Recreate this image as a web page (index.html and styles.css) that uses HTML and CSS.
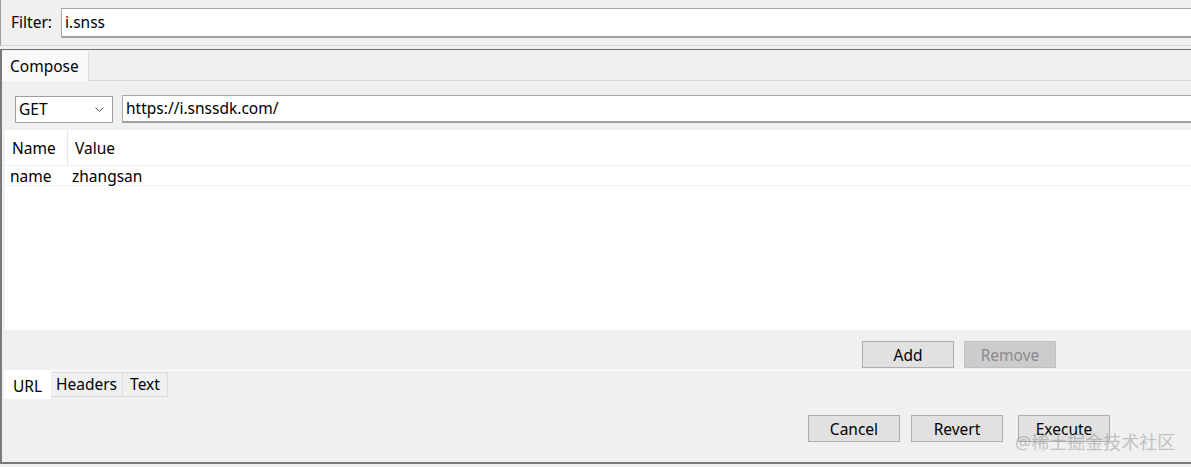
FILE: index.html
```html
<!DOCTYPE html>
<html lang="en">
<head>
    <meta charset="UTF-8">
    <title>Composer</title>
    <link rel="stylesheet" href="styles.css">
</head>
<body>
    <div class="filter-bar">
        <label class="filter-label">Filter:</label>
        <div class="filter-input">i.snss</div>
    </div>

    <div class="frame">
        <div class="top-tabs">
            <div class="top-tab">Compose</div>
        </div>

        <div class="compose">
            <div class="request-row">
                <div class="method">
                    <span>GET</span>
                    <svg class="chevron" width="9" height="6" viewBox="0 0 9 6"><path d="M0.5 0.5 L4.5 4.5 L8.5 0.5" fill="none" stroke="#555" stroke-width="1"/></svg>
                </div>
                <div class="url-input">https://i.snssdk.com/</div>
            </div>

            <div class="params">
                <div class="params-row params-head">
                    <div class="col-name">Name</div>
                    <div class="col-value">Value</div>
                </div>
                <div class="params-row params-item">
                    <div class="col-name">name</div>
                    <div class="col-value">zhangsan</div>
                </div>
            </div>

            <div class="params-actions">
                <button class="btn">Add</button>
                <button class="btn btn-disabled">Remove</button>
            </div>
        </div>

        <div class="bottom-tabs">
            <div class="bottom-tab active">URL</div>
            <div class="bottom-tab tab-headers">Headers</div>
            <div class="bottom-tab tab-text">Text</div>
        </div>

        <div class="footer">
            <button class="btn">Cancel</button>
            <button class="btn">Revert</button>
            <button class="btn btn-execute">Execute</button>
            <span class="watermark">@稀土掘金技术社区</span>
        </div>
    </div>
</body>
</html>
```

FILE: styles.css
```css
body {
    margin: 0;
    padding: 0;
    width: 1191px;
    height: 467px;
    overflow: hidden;
    background: #f0f0f0;
    font-family: "Noto Sans", "Noto Sans CJK SC", sans-serif;
    font-size: 15.5px;
    color: #000;
}

.filter-bar {
    height: 46px;
    box-sizing: border-box;
    display: flex;
    align-items: flex-start;
    padding-top: 8px;
    border-left: 1px solid #a0a0a0;
    border-bottom: 1px solid #d8d8d8;
}

.filter-label {
    width: 50px;
    padding-left: 10px;
    line-height: 28px;
}

.filter-input {
    flex: 1;
    height: 30px;
    box-sizing: border-box;
    background: #fff;
    border-top: 1px solid #a8a8a8;
    border-left: 1px solid #a8a8a8;
    border-bottom: 2px solid #a0a0a0;
    padding-left: 3px;
    line-height: 26px;
    margin-right: -4px;
}

.frame {
    position: relative;
    margin-top: 3px;
    height: 415px;
    box-sizing: border-box;
    border-top: 1px solid #6e6e6e;
    border-left: 2px solid #7a7a7a;
    border-bottom: 2px solid #7a7a7a;
}

.top-tabs {
    height: 31px;
    display: flex;
    border-bottom: 1px solid #d9d9d9;
    box-sizing: border-box;
    padding-top: 1px;
}

.top-tab {
    width: 87px;
    background: #fafafa;
    border-right: 1px solid #dcdcdc;
    padding-left: 8px;
    box-sizing: border-box;
    line-height: 30px;
    margin-bottom: -1px;
}

.compose {
    padding: 14px 0 0 3px;
}

.request-row {
    display: flex;
    align-items: flex-end;
    gap: 9px;
    padding-left: 10px;
    height: 28px;
}

.method {
    width: 98px;
    box-sizing: border-box;
    background: #fff;
    border: 1px solid #a0a0a0;
    display: flex;
    align-items: center;
    justify-content: space-between;
    padding: 0 8px 0 3px;
    height: 27px;
}

.method span {
    line-height: 25px;
}

.chevron {
    margin-top: 1px;
}

.url-input {
    flex: 1;
    height: 28px;
    box-sizing: border-box;
    background: #fff;
    border-top: 1px solid #a8a8a8;
    border-left: 1px solid #a8a8a8;
    border-bottom: 2px solid #a0a0a0;
    padding-left: 3px;
    line-height: 25px;
    margin-right: -4px;
}

.params {
    margin-top: 7px;
    height: 200px;
    background: #fff;
}

.params-row {
    display: flex;
}

.params-head {
    height: 35px;
    border-bottom: 1px solid #eeeeee;
    line-height: 37px;
}

.params-head .col-name {
    width: 55px;
    padding-left: 7px;
    border-right: 1px solid #e5e5e5;
}

.params-head .col-value {
    padding-left: 7px;
}

.params-item {
    height: 19px;
    line-height: 21px;
    border-bottom: 1px solid #f0f0f0;
}

.params-item .col-name {
    width: 62px;
    padding-left: 5px;
}

.params-item .col-value {
    padding-left: 0;
}

.params-actions {
    height: 41px;
    box-sizing: border-box;
    display: flex;
    align-items: flex-start;
    gap: 10px;
    padding: 11px 0 0 857px;
    border-bottom: 1px solid #fbfbfb;
}

.btn {
    width: 92px;
    height: 27px;
    box-sizing: border-box;
    background: #e1e1e1;
    border: 1px solid #adadad;
    border-radius: 0;
    font-family: inherit;
    font-size: 15.5px;
    color: #000;
    padding: 0;
    line-height: 24px;
}

.btn-disabled {
    background: #cccccc;
    border-color: #bfbfbf;
    color: #8a8a8a;
}

.bottom-tabs {
    display: flex;
    height: 28px;
    padding-left: 2px;
    align-items: flex-start;
}

.bottom-tab {
    height: 25px;
    margin-top: 1px;
    box-sizing: border-box;
    border: 1px solid #dcdcdc;
    border-left: none;
    line-height: 22px;
    text-align: center;
}

.tab-headers {
    width: 72px;
}

.tab-text {
    width: 45px;
}

.bottom-tab.active {
    height: 29px;
    margin-top: -1px;
    width: 47px;
    background: #fff;
    border: none;
    line-height: 32px;
}

.footer {
    display: flex;
    gap: 11px;
    padding: 16px 0 0 806px;
}

.btn-execute {
    margin-left: 4px;
}

.watermark {
    position: absolute;
    left: 1013px;
    top: 378px;
    font-size: 18px;
    color: rgba(150, 150, 150, 0.55);
}
```
